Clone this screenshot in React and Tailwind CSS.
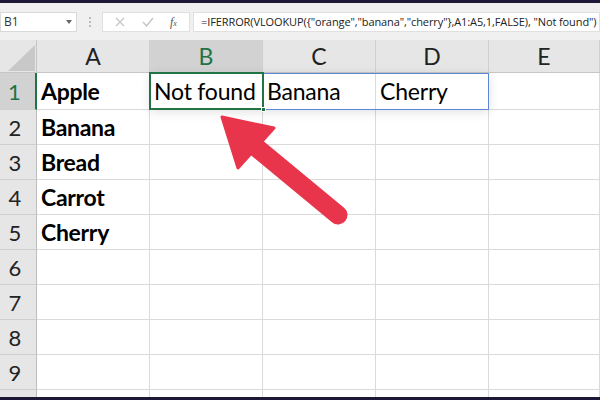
import React from 'react';

const cellFont = { fontFamily: 'Lato, "Open Sans", sans-serif' };

const formula = '=IFERROR(VLOOKUP({"orange","banana","cherry"},A1:A5,1,FALSE), "Not found")';

const cols = [
  { id: 'A', w: 'w-[113px]' },
  { id: 'B', w: 'w-[113px]' },
  { id: 'C', w: 'w-[113px]' },
  { id: 'D', w: 'w-[113px]' },
  { id: 'E', w: 'w-[111px]' },
];

const data = {
  1: { A: 'Apple', B: 'Not found', C: 'Banana', D: 'Cherry' },
  2: { A: 'Banana' },
  3: { A: 'Bread' },
  4: { A: 'Carrot' },
  5: { A: 'Cherry' },
};

function Toolbar() {
  return (
    <div className="h-[37px] bg-[#f0f0f0] flex items-start pt-[9px] text-[#333]" style={{ fontFamily: '"Open Sans", sans-serif' }}>
      <div className="w-[77px] h-[20px] bg-white border border-[#d9d9d9] flex items-center justify-between pl-[3px] pr-[4px] text-[12px]">
        <span>B1</span>
        <span className="w-0 h-0 border-l-[3px] border-r-[3px] border-t-[4px] border-l-transparent border-r-transparent border-t-[#666]" />
      </div>
      <div className="w-[25px] h-[20px] flex flex-col items-center justify-center gap-[2px]">
        <span className="w-[2px] h-[2px] bg-[#bbb]" />
        <span className="w-[2px] h-[2px] bg-[#bbb]" />
        <span className="w-[2px] h-[2px] bg-[#bbb]" />
      </div>
      <div className="w-[88px] h-[20px] bg-white border border-[#e0e0e0] flex items-center justify-around px-1">
        <svg width="10" height="10" viewBox="0 0 10 10" stroke="#c4c4c4" strokeWidth="1.2" fill="none">
          <path d="M1 1l8 8M9 1l-8 8" />
        </svg>
        <svg width="12" height="10" viewBox="0 0 12 10" stroke="#c4c4c4" strokeWidth="1.4" fill="none">
          <path d="M1 5l3.5 4L11 1" />
        </svg>
        <span className="text-[12px] italic text-[#555]" style={{ fontFamily: '"Liberation Serif", serif' }}>
          f<span className="text-[8px]">x</span>
        </span>
      </div>
      <div className="ml-[3px] flex-1 h-[20px] bg-white border border-[#e0e0e0] flex items-center pl-[7px] text-[11px] tracking-[-0.1px] text-[#222] whitespace-nowrap overflow-hidden">
        {formula}
      </div>
    </div>
  );
}

function HeaderRow() {
  return (
    <div className="flex h-[33px] bg-[#e6e6e6] border-b border-[#c6c6c6]" style={cellFont}>
      <div className="w-[37px] shrink-0 border-r border-[#c6c6c6] relative">
        <svg className="absolute inset-0" width="37" height="33" viewBox="0 0 37 33">
          <polygon points="8,31 35,31 35,5" fill="#c8c8c8" />
        </svg>
      </div>
      {cols.map((c) => (
        <div
          key={c.id}
          className={`${c.w} shrink-0 flex items-center justify-center text-[23px] border-r border-[#d0d0d0] ${
            c.id === 'B' ? 'bg-[#d2d2d2] text-[#217346]' : 'text-[#222]'
          }`}
        >
          {c.id}
        </div>
      ))}
    </div>
  );
}

function Row({ n }) {
  const row = data[n] || {};
  const active = n === 1;
  return (
    <div className={`flex ${n === 1 ? 'h-[37px]' : 'h-[35px]'}`} style={cellFont}>
      <div
        className={`w-[37px] shrink-0 flex items-center justify-center pr-[6px] text-[22px] border-b border-[#cfcfcf] ${
          active ? 'bg-[#d2d2d2] text-[#217346] border-r-2 border-r-[#217346]' : 'bg-[#e6e6e6] text-[#222] border-r border-r-[#bdbdbd]'
        }`}
      >
        {n < 10 ? n : ''}
      </div>
      {cols.map((c) => (
        <div
          key={c.id}
          className={`${c.w} shrink-0 flex items-center pl-[4px] text-[23px] text-black border-r border-b border-[#dadada] whitespace-nowrap ${
            c.id === 'A' ? 'font-bold tracking-[-0.3px]' : 'tracking-[-0.2px]'
          }`}
        >
          {row[c.id] || ''}
        </div>
      ))}
    </div>
  );
}

export default function App() {
  return (
    <div className="w-[600px] h-[400px] bg-[#1b1838] overflow-hidden flex flex-col relative">
      <div className="h-[3px] shrink-0" />
      <Toolbar />
      <div className="flex-1 bg-white overflow-hidden relative">
        <HeaderRow />
        {[1, 2, 3, 4, 5, 6, 7, 8, 9, 10].map((n) => (
          <Row key={n} n={n} />
        ))}
        {/* spill range outline */}
        <div className="absolute left-[150px] top-[33px] w-[339px] h-[37px] shadow-[0_2px_10px_rgba(0,0,0,0.12)] pointer-events-none" />
        <div className="absolute left-[262px] top-[33px] w-[227px] h-[37px] border border-[#5b87d6] pointer-events-none" />
        {/* active cell */}
        <div className="absolute left-[149px] top-[32px] w-[115px] h-[38px] border-2 border-[#217346] pointer-events-none">
          <span className="absolute -right-[4px] -bottom-[4px] w-[5px] h-[5px] bg-[#217346] border border-white" />
        </div>
      </div>
      <div className="h-[3px] shrink-0" />
      {/* arrow */}
      <svg className="absolute inset-0 pointer-events-none" width="600" height="400" viewBox="0 0 600 400">
        <line x1="257" y1="148" x2="338" y2="215" stroke="#e8354b" strokeWidth="19" strokeLinecap="round" />
        <polygon points="222,117 274,128 238,168" fill="#e8354b" stroke="#e8354b" strokeWidth="3" strokeLinejoin="round" />
      </svg>
    </div>
  );
}
